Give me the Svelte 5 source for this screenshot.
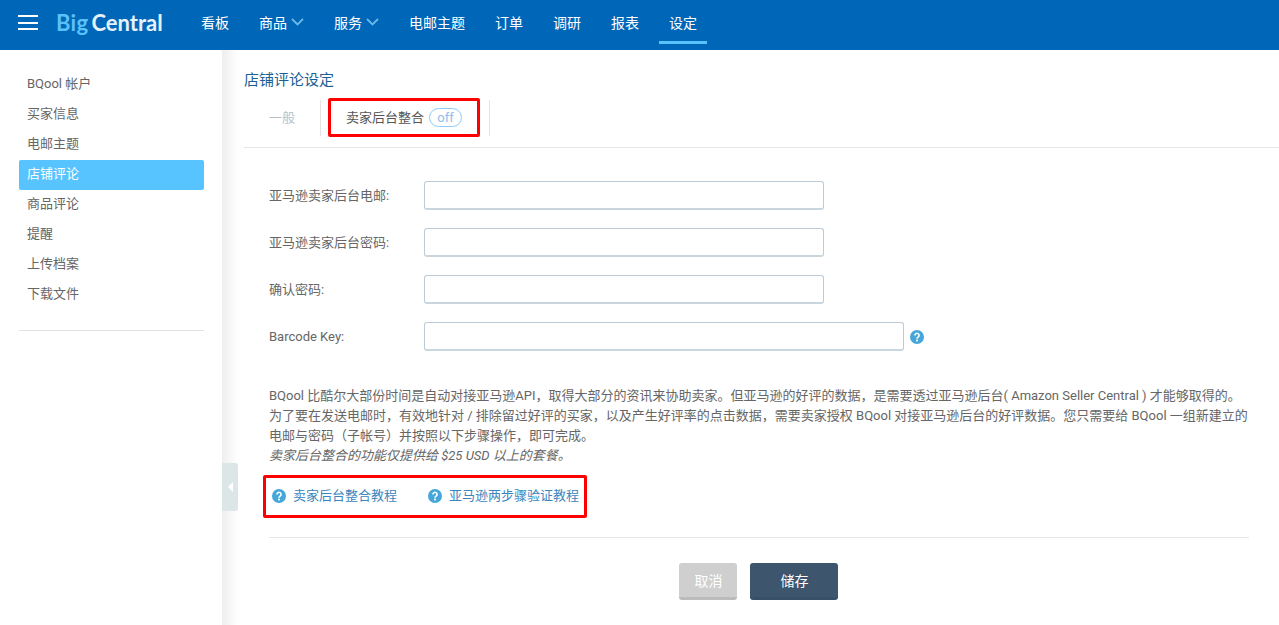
<script>
	const navItems = [
		{ label: '看板' },
		{ label: '商品', caret: true },
		{ label: '服务', caret: true },
		{ label: '电邮主题' },
		{ label: '订单' },
		{ label: '调研' },
		{ label: '报表' },
		{ label: '设定', active: true }
	];

	const sideItems = ['BQool 帐户', '买家信息', '电邮主题', '店铺评论', '商品评论', '提醒', '上传档案', '下载文件'];

	const fields = [
		{ label: '亚马逊卖家后台电邮:' },
		{ label: '亚马逊卖家后台密码:' },
		{ label: '确认密码:' },
		{ label: 'Barcode Key:', wide: true }
	];
</script>

{#snippet help()}
	<svg class="help" viewBox="0 0 14 14" width="14" height="14" aria-hidden="true">
		<circle cx="7" cy="7" r="7" fill="#45a7d9" />
		<path d="M4.9 5.4a2.1 2 0 1 1 3.2 1.7c-.8.5-1.100.8-1.100 1.600" fill="none" stroke="#fff" stroke-width="1.6" />
		<rect x="6.100" y="9.600" width="1.800" height="1.800" fill="#fff" />
	</svg>
{/snippet}

<header class="topbar">
	<button class="burger" aria-label="Menu"><span></span><span></span><span></span></button>
	<div class="logo"><span class="big">Big</span><span class="central">Central</span></div>
	<nav class="nav">
		{#each navItems as item}
			<a href="#top" class="nav-item" class:active={item.active}>
				{item.label}
				{#if item.caret}
					<svg class="caret" viewBox="0 0 13 8" width="13" height="8" aria-hidden="true">
						<path d="M1 1 6.500 6.500 12 1" fill="none" stroke="#6ab8ea" stroke-width="1.8" />
					</svg>
				{/if}
			</a>
		{/each}
	</nav>
</header>

<div class="page">
	<aside class="sidebar">
		<ul class="side-list">
			{#each sideItems as item}
				<li class="side-item" class:current={item === '店铺评论'}>{item}</li>
			{/each}
		</ul>
	</aside>

	<main class="main">
		<div class="collapse"><span class="arrow"></span></div>
		<h1 class="title">店铺评论设定</h1>
		<div class="tabs">
			<div class="tab muted">一般</div>
			<div class="tab-sep"></div>
			<div class="tab-mark">
				<span class="tab-text">卖家后台整合</span>
				<span class="pill">off</span>
			</div>
			<div class="tab-sep last"></div>
		</div>

		<form class="form">
			{#each fields as field}
				<div class="row">
					<label class="label" class:latin={field.wide} for={field.label}>{field.label}</label>
					<input id={field.label} class="input" class:wide={field.wide} type="text" />
					{#if field.wide}{@render help()}{/if}
				</div>
			{/each}

			<div class="intro">
				BQool 比酷尔大部份时间是自动对接亚马逊API，取得大部分的资讯来协助卖家。但亚马逊的好评的数据，是需要透过亚马逊后台( Amazon Seller Central ) 才能够取得的。<br />
				为了要在发送电邮时，有效地针对 / 排除留过好评的买家，以及产生好评率的点击数据，需要卖家授权 BQool 对接亚马逊后台的好评数据。您只需要给 BQool 一组新建立的电邮与密码（子帐号）并按照以下步骤操作，即可完成。<br />
				<em>卖家后台整合的功能仅提供给 $25 USD 以上的套餐。</em>
			</div>

			<div class="links">
				<a href="#top" class="link">{@render help()}<span class="link-text">卖家后台整合教程</span></a>
				<a href="#top" class="link">{@render help()}<span class="link-text">亚马逊两步骤验证教程</span></a>
			</div>

			<div class="actions">
				<button type="button" class="btn cancel">取消</button>
				<button type="button" class="btn save">储存</button>
			</div>
		</form>
	</main>
</div>

<style>
	:global(body) {
		margin: 0;
		background: #fff;
		font-family: Roboto, 'Noto Sans CJK SC', sans-serif;
		font-size: 13px;
		color: #666;
		overflow: hidden;
	}

	.topbar {
		display: flex;
		align-items: center;
		height: 50px;
		background: #0066b8;
	}

	.burger {
		display: flex;
		flex-direction: column;
		gap: 4.500px;
		width: 20px;
		margin: 0 18px 5px;
		padding: 0;
		border: none;
		background: none;
	}

	.burger span {
		height: 2px;
		background: #fff;
	}

	.logo {
		width: 135px;
		height: 50px;
		font-family: Lato, sans-serif;
		font-size: 22px;
		font-weight: 700;
		line-height: 46px;
	}

	.big {
		color: #5ac2fa;
		margin-right: 3px;
		letter-spacing: 0.3px;
	}

	.central {
		color: #e6f1f9;
	}

	.nav {
		display: flex;
		gap: 10px;
		height: 50px;
	}

	.nav-item {
		display: flex;
		align-items: center;
		box-sizing: border-box;
		height: 44px;
		padding: 0 10px 1px;
		color: #fff;
		font-size: 14px;
		text-decoration: none;
	}

	.nav-item.active {
		border-bottom: 3px solid #5ac2fa;
		padding-top: 2px;
		padding-bottom: 0;
	}

	.caret {
		margin-left: 4px;
	}

	.page {
		display: flex;
		height: 575px;
		overflow: hidden;
	}

	.sidebar {
		flex: none;
		box-sizing: border-box;
		width: 222px;
		padding: 20px 18px 0 19px;
	}

	.side-list {
		margin: 0;
		padding: 0 0 20px;
		list-style: none;
		border-bottom: 1px solid #e2e2e2;
	}

	.side-item {
		height: 30px;
		padding-left: 8px;
		line-height: 28px;
		border-radius: 2px;
	}

	.side-item.current {
		background: #57c3ff;
		color: #fff;
	}

	.main {
		position: relative;
		flex: 1;
		min-width: 0;
		box-sizing: border-box;
		padding: 20px 0 0 22px;
		background: linear-gradient(90deg, #eee, #fff 16px);
	}

	.collapse {
		position: absolute;
		left: 0;
		top: 413px;
		width: 16px;
		height: 48px;
		display: flex;
		align-items: center;
		justify-content: center;
		background: #dde6e6;
		border-radius: 0 3px 3px 0;
	}

	.arrow {
		border: 5px solid transparent;
		border-left: none;
		border-right: 5px solid #fff;
	}

	.title {
		margin: 0;
		font-size: 15px;
		font-weight: 400;
		line-height: 20px;
		color: #1d5f94;
	}

	.tabs {
		display: flex;
		align-items: center;
		height: 49px;
		margin-top: 8px;
		border-bottom: 1px solid #e6e6e6;
	}

	.tab {
		padding: 0 25px 2px;
		margin-bottom: 10px;
	}

	.muted {
		color: #b5bfc7;
		font-size: 13px;
	}

	.tab-sep {
		width: 1px;
		height: 36px;
		margin-bottom: 10px;
		background: #e4e4e4;
	}

	.tab-sep.last {
		margin-left: 9px;
	}

	.tab-mark {
		display: flex;
		align-items: center;
		gap: 5px;
		box-sizing: border-box;
		width: 152px;
		height: 39px;
		margin: 0 0 11px 7px;
		padding: 0 15px;
		border: 3px solid #f00;
		border-radius: 2px;
		color: #555;
	}

	.tab-text {
		margin-bottom: 1px;
	}

	.pill {
		box-sizing: border-box;
		width: 33px;
		height: 19px;
		border: 1px solid #8ccdfb;
		border-radius: 10px;
		color: #8fbdec;
		font-size: 13px;
		line-height: 17px;
		text-align: center;
	}

	.form {
		padding: 33px 30px 0 25px;
	}

	.row {
		display: flex;
		align-items: center;
		height: 29px;
		margin-bottom: 18px;
	}

	.label {
		flex: none;
		width: 155px;
		margin-bottom: 2px;
	}

	.label.latin {
		margin-bottom: 0;
	}

	.input {
		box-sizing: border-box;
		width: 400px;
		height: 29px;
		padding: 0 8px;
		border: 1px solid #bccbd6;
		border-bottom: 2px solid #c9d6de;
		border-radius: 3px;
		background: #fff;
		outline: none;
	}

	.input.wide {
		width: 480px;
	}

	.help {
		flex: none;
		display: block;
	}

	.row .help {
		margin-left: 6px;
	}

	.intro {
		margin-top: 35px;
		line-height: 20px;
	}

	.links {
		display: flex;
		gap: 31px;
		align-items: center;
		box-sizing: border-box;
		width: 324px;
		height: 43px;
		margin: 9px 0 0 -6px;
		padding-left: 6px;
		border: 3px solid #f00;
		border-radius: 2px;
	}

	.link {
		display: flex;
		align-items: center;
		gap: 7px;
		color: #3a86bd;
		text-decoration: none;
		white-space: nowrap;
	}

	.link .help {
		margin-bottom: 2px;
	}

	.link-text {
		margin-bottom: 4px;
	}

	.actions {
		display: flex;
		justify-content: center;
		gap: 13px;
		margin-top: 19px;
		padding: 25px 2px 0 0;
		border-top: 1px solid #e6e6e6;
	}

	.btn {
		box-sizing: border-box;
		height: 37px;
		padding: 0 0 0 2px;
		border: none;
		border-radius: 3px;
		color: #fff;
		font: inherit;
		font-size: 14px;
	}

	.cancel {
		width: 58px;
		background: #cfcfcf;
		border-bottom: 3px solid #bbb;
	}

	.save {
		width: 88px;
		background: #3e556e;
		border-bottom: 3px solid #385068;
	}
</style>
